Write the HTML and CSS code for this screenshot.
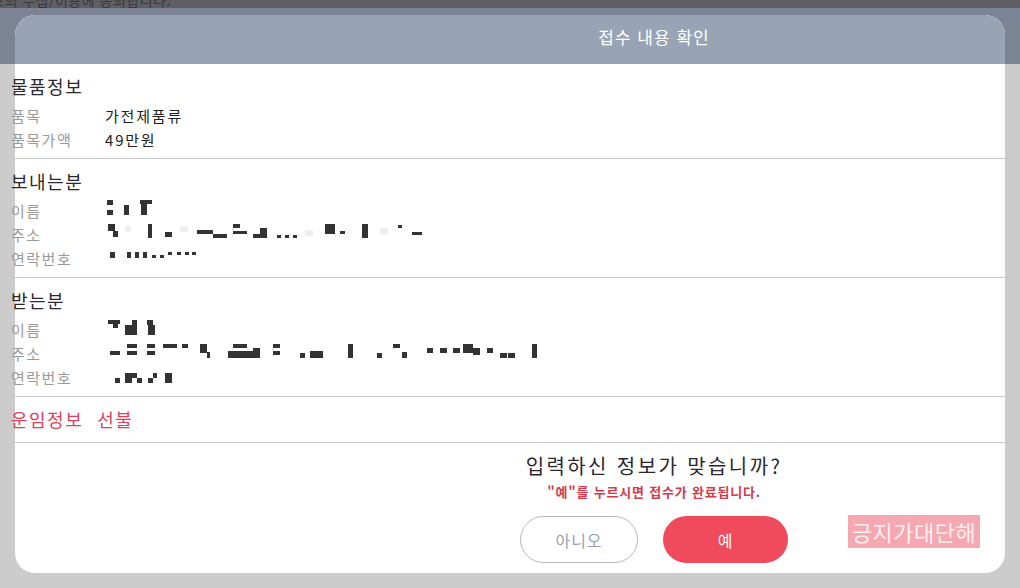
FILE: index.html
```html
<!DOCTYPE html>
<html lang="ko">
<head>
<meta charset="utf-8">
<title>접수 내용 확인</title>
<link rel="stylesheet" href="styles.css">
</head>
<body>
<div class="page-top"><div class="page-note">보의 수집/이용에 동의합니다.</div></div>
<div class="page-band"></div>

<div class="modal">
  <div class="modal-head">접수 내용 확인</div>
  <div class="sheet">
    <section class="sec">
      <h2 class="sec-title">물품정보</h2>
      <div class="rows">
        <div class="row"><span class="label">품목</span><span class="value">가전제품류</span></div>
        <div class="row"><span class="label">품목가액</span><span class="value">49만원</span></div>
      </div>
    </section>
    <section class="sec">
      <h2 class="sec-title">보내는분</h2>
      <div class="rows">
        <div class="row"><span class="label">이름</span>
          <svg class="mask" width="60" height="24" viewBox="0 0 60 24"><g fill="#333"><rect x="2" y="2" width="6" height="5"/><rect x="2" y="12" width="6" height="5"/><rect x="19" y="7" width="5" height="10"/><rect x="35" y="2" width="12" height="4"/><rect x="36" y="6" width="6" height="11"/></g></svg>
        </div>
        <div class="row"><span class="label">주소</span>
          <svg class="mask" width="330" height="24" viewBox="0 0 330 24"><g fill="#333"><rect x="3" y="2" width="7" height="7"/><rect x="8" y="9" width="5" height="6"/><rect x="43" y="2" width="4" height="14"/><rect x="60" y="10" width="7" height="5"/><rect x="92" y="8" width="16" height="4"/><rect x="108" y="12" width="14" height="4"/><rect x="128" y="2" width="7" height="4"/><rect x="128" y="9" width="14" height="3"/><rect x="148" y="12" width="14" height="4"/><rect x="155" y="6" width="7" height="6"/><rect x="172" y="13" width="4" height="3"/><rect x="180" y="13" width="4" height="3"/><rect x="188" y="13" width="4" height="3"/><rect x="220" y="2" width="10" height="10"/><rect x="235" y="9" width="5" height="3"/><rect x="257" y="2" width="6" height="14"/><rect x="293" y="3" width="4" height="3"/><rect x="307" y="10" width="10" height="3"/></g><g fill="#eee"><rect x="20" y="4" width="6" height="6"/><rect x="75" y="4" width="8" height="6"/><rect x="200" y="8" width="8" height="6"/><rect x="275" y="6" width="8" height="6"/></g></svg>
        </div>
        <div class="row"><span class="label">연락번호</span>
          <svg class="mask" width="100" height="24" viewBox="0 0 100 24"><g fill="#333"><rect x="5" y="6" width="5" height="6"/><rect x="22" y="6" width="4" height="6"/><rect x="30" y="6" width="4" height="6"/><rect x="38" y="6" width="4" height="6"/><rect x="47" y="9" width="4" height="3"/><rect x="55" y="9" width="4" height="3"/><rect x="63" y="6" width="4" height="3"/><rect x="72" y="6" width="4" height="3"/><rect x="80" y="6" width="4" height="3"/><rect x="87" y="6" width="4" height="3"/></g></svg>
        </div>
      </div>
    </section>
    <section class="sec">
      <h2 class="sec-title">받는분</h2>
      <div class="rows">
        <div class="row"><span class="label">이름</span>
          <svg class="mask" width="60" height="24" viewBox="0 0 60 24"><g fill="#333"><rect x="3" y="3" width="12" height="4"/><rect x="8" y="7" width="5" height="4"/><rect x="20" y="8" width="12" height="10"/><rect x="27" y="3" width="5" height="5"/><rect x="42" y="3" width="6" height="5"/><rect x="43" y="8" width="7" height="10"/></g></svg>
        </div>
        <div class="row"><span class="label">주소</span>
          <svg class="mask" width="440" height="24" viewBox="0 0 440 24"><g fill="#333"><rect x="5" y="10" width="10" height="4"/><rect x="22" y="3" width="10" height="4"/><rect x="22" y="10" width="10" height="4"/><rect x="42" y="3" width="8" height="4"/><rect x="42" y="10" width="8" height="4"/><rect x="58" y="3" width="14" height="4"/><rect x="77" y="3" width="6" height="4"/><rect x="95" y="3" width="7" height="9"/><rect x="102" y="11" width="3" height="6"/><rect x="128" y="3" width="14" height="4"/><rect x="123" y="10" width="32" height="7"/><rect x="148" y="7" width="7" height="10"/><rect x="168" y="3" width="7" height="4"/><rect x="168" y="10" width="7" height="4"/><rect x="195" y="12" width="5" height="5"/><rect x="205" y="10" width="13" height="7"/><rect x="243" y="3" width="5" height="14"/><rect x="272" y="12" width="5" height="5"/><rect x="288" y="3" width="7" height="4"/><rect x="297" y="11" width="5" height="6"/><rect x="322" y="7" width="6" height="5"/><rect x="335" y="7" width="7" height="5"/><rect x="348" y="7" width="7" height="5"/><rect x="358" y="3" width="10" height="9"/><rect x="368" y="7" width="7" height="7"/><rect x="382" y="7" width="6" height="5"/><rect x="395" y="12" width="7" height="5"/><rect x="403" y="12" width="7" height="5"/><rect x="427" y="3" width="5" height="14"/></g></svg>
        </div>
        <div class="row"><span class="label">연락번호</span>
          <svg class="mask" width="80" height="24" viewBox="0 0 80 24"><g fill="#333"><rect x="10" y="13" width="5" height="5"/><rect x="20" y="8" width="7" height="10"/><rect x="27" y="8" width="5" height="5"/><rect x="32" y="13" width="5" height="5"/><rect x="43" y="13" width="5" height="5"/><rect x="48" y="8" width="4" height="5"/><rect x="60" y="8" width="7" height="10"/></g></svg>
        </div>
      </div>
    </section>
    <section class="sec sec-fare">
      <h2 class="sec-title fare"><span>운임정보</span><span>선불</span></h2>
    </section>
  </div>

  <div class="confirm">
    <p class="q">입력하신 정보가 맞습니까?</p>
    <p class="hint">"예"를 누르시면 접수가 완료됩니다.</p>
    <div class="btns">
      <button class="btn btn-no" type="button">아니오</button>
      <button class="btn btn-yes" type="button">예</button>
    </div>
  </div>

  <div class="stamp">긍지가대단해</div>
</div>
</body>
</html>
```

FILE: styles.css
```css
* { box-sizing: border-box; }
html, body { margin: 0; padding: 0; }
body {
  width: 1020px;
  height: 588px;
  overflow: hidden;
  background: #cccccc;
  font-family: "Noto Sans CJK KR", "Noto Sans", sans-serif;
  position: relative;
}
.page-top {
  height: 8px;
  background: #5f5e62;
  overflow: hidden;
}
.page-note {
  margin: -7px 0 0 -9px;
  font-size: 14px;
  line-height: 14px;
  letter-spacing: 0.5px;
  color: #3a393d;
  white-space: nowrap;
}
.page-band {
  height: 56px;
  background: #7b8394;
}
.modal {
  position: absolute;
  left: 15px;
  top: 15px;
  width: 990px;
  height: 558px;
  background: #ffffff;
  border-radius: 20px;
}
.modal-head {
  height: 49px;
  background: #98a3b6;
  border-radius: 20px 20px 0 0;
  color: #ffffff;
  font-size: 17px;
  line-height: 43px;
  letter-spacing: 1px;
  text-align: center;
  padding-left: 288px;
}
.sheet {
  margin: 0 -20px 0 -6px;
}
.sec {
  padding: 9px 0 7px 2px;
  border-bottom: 1px solid #c9c9c9;
}
.sec-title {
  margin: 0;
  font-size: 18px;
  font-weight: 400;
  line-height: 26px;
  letter-spacing: 1.5px;
  color: #2b2730;
}
.rows {
  margin-top: 4px;
}
.row {
  display: flex;
  align-items: center;
  height: 24px;
}
.label {
  width: 94px;
  flex: none;
  font-size: 15px;
  letter-spacing: 1.5px;
  color: #9a9a9a;
}
.value {
  font-size: 15px;
  letter-spacing: 1.8px;
  color: #222222;
}
.mask { display: block; flex: none; }
.sec-fare {
  padding-bottom: 10px;
}
.fare {
  display: flex;
  gap: 14px;
  color: #da435c;
}
.confirm {
  padding: 9px 0 0 288px;
  display: flex;
  flex-direction: column;
  align-items: center;
}
.q {
  margin: 0;
  font-size: 20px;
  line-height: 28px;
  letter-spacing: 2.4px;
  color: #2b2730;
}
.hint {
  margin: 2px 0 0;
  font-size: 13px;
  line-height: 20px;
  font-weight: 700;
  letter-spacing: 0.8px;
  color: #d13b4c;
}
.btns {
  display: flex;
  gap: 25px;
  margin-top: 14px;
}
.btn {
  height: 47px;
  border-radius: 24px;
  font-family: inherit;
  font-size: 16px;
  letter-spacing: 1px;
  cursor: pointer;
}
.btn-no {
  width: 118px;
  background: #ffffff;
  border: 1px solid #b5b9c0;
  color: #9aa1ad;
}
.btn-yes {
  width: 125px;
  background: #ef4b5c;
  border: none;
  color: #ffffff;
}
.stamp {
  position: absolute;
  left: 833px;
  top: 500px;
  width: 132px;
  height: 33px;
  background: #f6a8b1;
  color: #fdeff1;
  font-size: 22px;
  line-height: 33px;
  letter-spacing: 0.5px;
  text-align: center;
  white-space: nowrap;
}
```
